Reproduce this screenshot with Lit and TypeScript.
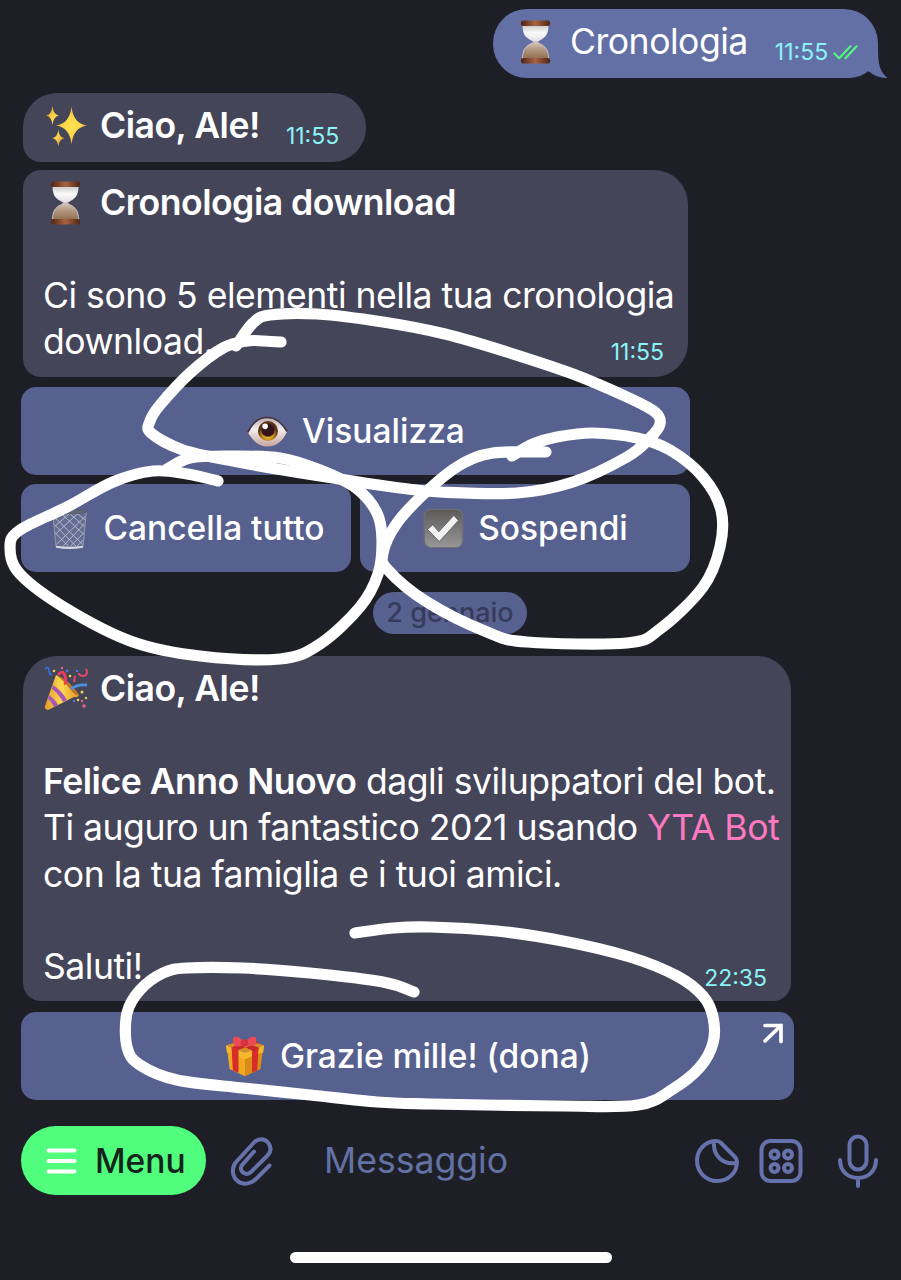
import { LitElement, html, css, svg, nothing } from "lit";
import { customElement, property } from "lit/decorators.js";

type Point = [number, number];

/* Smooth curve through hand-placed points (Catmull-Rom to Bezier). */
function smooth(points: Point[]): string {
  const out = [`M${points[0][0]} ${points[0][1]}`];
  for (let i = 0; i < points.length - 1; i++) {
    const a = points[Math.max(i - 1, 0)];
    const b = points[i];
    const c = points[i + 1];
    const d = points[Math.min(i + 2, points.length - 1)];
    const x1 = b[0] + (c[0] - a[0]) / 6;
    const y1 = b[1] + (c[1] - a[1]) / 6;
    const x2 = c[0] - (d[0] - b[0]) / 6;
    const y2 = c[1] - (d[1] - b[1]) / 6;
    out.push(`C${x1.toFixed(1)} ${y1.toFixed(1)} ${x2.toFixed(1)} ${y2.toFixed(1)} ${c[0]} ${c[1]}`);
  }
  return out.join("");
}

const STROKES: Point[][] = [
  [[281, 342], [264, 341], [247, 341], [223, 348], [190, 373], [160, 405], [150, 421], [151, 433], [183, 450], [233, 461], [283, 470], [333, 478], [400, 488], [440, 492], [517, 493], [573, 482], [627, 457], [650, 438], [660, 424], [655, 412], [627, 397], [573, 374], [507, 352], [445, 334], [383, 322], [317, 314], [270, 315], [253, 323], [236, 346]],
  [[218, 481], [187, 474], [153, 471], [113, 482], [67, 507], [20, 530], [10, 547], [20, 574], [67, 609], [133, 642], [200, 656], [280, 659], [320, 644], [360, 607], [378, 574], [382, 540], [377, 513], [356, 488], [320, 470], [280, 458], [230, 456], [190, 458], [167, 469]],
  [[546, 452], [493, 453], [460, 465], [427, 491], [397, 523], [383, 553], [388, 570], [427, 602], [487, 632], [527, 642], [627, 643], [660, 629], [703, 587], [720, 547], [721, 510], [703, 477], [670, 450], [637, 438], [593, 433], [557, 437], [533, 444], [512, 456]],
  [[355, 933], [393, 928], [430, 927], [497, 931], [563, 941], [630, 957], [677, 976], [703, 996], [713, 1017], [713, 1043], [700, 1067], [673, 1089], [638, 1105], [563, 1106], [430, 1104], [377, 1102], [310, 1095], [243, 1088], [177, 1080], [140, 1065], [127, 1047], [127, 1013], [140, 990], [163, 973], [187, 968], [243, 968], [310, 973], [383, 982], [414, 992]],
];

const GLYPHS = {
  hourglass: svg`
    <defs>
      <linearGradient id="cap"><stop offset="0" stop-color="#4e2417"/><stop offset=".5" stop-color="#a9633f"/><stop offset="1" stop-color="#4e2417"/></linearGradient>
      <linearGradient id="top" x2="0" y2="1"><stop offset="0" stop-color="#c9c6c8"/><stop offset=".45" stop-color="#fbfbfb"/><stop offset="1" stop-color="#dedbe0"/></linearGradient>
      <linearGradient id="sand" x2="0" y2="1"><stop offset="0" stop-color="#d9cbc2"/><stop offset=".45" stop-color="#b39880"/><stop offset="1" stop-color="#8f6d50"/></linearGradient>
    </defs>
    <path d="M9.500 6h26c0 9-3 12.500-8 15-2.500 1.200-3.500 2.500-5 2.500s-2.500-1.300-5-2.500c-5-2.500-8-6-8-15z" fill="url(#top)"/>
    <path d="M22.500 22.500c1.500 0 2.500 1.300 5 2.500 5 2.500 8 6 8 15h-26c0-9 3-12.500 8-15 2.500-1.200 3.500-2.500 5-2.500z" fill="url(#sand)" stroke="#c8c2c6" stroke-width="1"/>
    <rect x="8" y="1.500" width="29" height="5.500" rx="1.800" fill="url(#cap)"/>
    <rect x="8" y="39" width="29" height="5.500" rx="1.800" fill="url(#cap)"/>`,
  sparkles: svg`
    <defs><radialGradient id="gold"><stop offset="0" stop-color="#ffe453"/><stop offset=".6" stop-color="#fbd448"/><stop offset="1" stop-color="#e6a73a"/></radialGradient></defs>
    <path fill="url(#gold)" d="M28.500 3.500q1.700 17 15.500 19-13.800 2-15.500 19-1.700-17-15.500-19 13.800-2 15.500-19z"/>
    <path fill="url(#gold)" d="M9.500 3q.9 8.500 6.300 9.500-5.400 1-6.300 9.500-.9-8.500-6.300-9.500 5.400-1 6.300-9.500zM15.300 27q.8 7.300 6 8.200-5.200 1-6 8.200-.8-7.300-6-8.200 5.200-1 6-8.200z"/>`,
  eye: svg`
    <defs>
      <linearGradient id="white" x2="0" y2="1"><stop offset="0" stop-color="#b7a8b0"/><stop offset=".4" stop-color="#f3eeee"/><stop offset="1" stop-color="#c7a6a0"/></linearGradient>
      <radialGradient id="iris" cy=".75"><stop offset="0" stop-color="#f2c838"/><stop offset=".6" stop-color="#b77f1a"/><stop offset="1" stop-color="#5d3417"/></radialGradient>
    </defs>
    <path d="M2 24C8 12 14 8 23 8s15 5 21 15c-5 11-12 16-21 16S8 34 2 24z" fill="url(#white)"/>
    <path d="M2 24C8 12 14 8 23 8s15 5 21 15" fill="none" stroke="#47343b" stroke-width="1.800"/>
    <circle cx="23.500" cy="22.500" r="10.700" fill="url(#iris)"/>
    <circle cx="23.500" cy="21.500" r="7" fill="#32141a"/>
    <circle cx="20.500" cy="17.500" r="3" fill="#fff"/>`,
  basket: svg`
    <path d="M5 5h36l-3.500 37q-14 3-29 0z" fill="#767f9b" opacity=".45"/>
    <path d="M6 10l31 30M13 6l25 23M22 6l17 15M30 6l10 8M6 18l24 24M7 27l15 15M40 10L9 40M33 6L8 29M24 6L7 21M16 6L6 14M39 18L16 42M39 27L24 42M38 35l-7 7" stroke="#b9bdc8" stroke-width="1" fill="none"/>
    <path d="M5 5l3.500 37M41 5l-3.500 37" stroke="#8f94a3" stroke-width="1.200"/>
    <ellipse cx="23" cy="5" rx="18.500" ry="2" fill="#62687b" stroke="#5c5f6a" stroke-width="1.200"/>
    <path d="M8.500 42.500q14.500 2.500 29 0" stroke="#d5d8df" stroke-width="2.200" fill="none"/>`,
  check: svg`
    <defs><linearGradient id="box" x2="0" y2="1"><stop offset="0" stop-color="#5b5a59"/><stop offset="1" stop-color="#999898"/></linearGradient></defs>
    <rect x="2.500" y="2.500" width="41" height="41" rx="7" fill="url(#box)" stroke="#6d6e78" stroke-width="1.500"/>
    <path d="M6 24l5.500-5 6.500 7.500L34 9l5 5.500L18.500 37z" fill="#f1f1f1" stroke="#505050" stroke-width=".8"/>`,
  party: svg`
    <defs><linearGradient id="cone"><stop offset="0" stop-color="#e39a2d"/><stop offset=".5" stop-color="#ffd94f"/><stop offset="1" stop-color="#dd9427"/></linearGradient></defs>
    <path d="M13 9Q26 14 36 29q-1 3-5 2L5 44q-4-1-3-4z" fill="url(#cone)"/>
    <path d="M10 19q9 6 14 15l-4 2Q15 27 9 23zM6 29q6 4 9 10l-4 2q-3-6-6-8z" fill="#a457b8"/>
    <path d="M13 9Q26 14 36 29q-4 1-9-6T13 9z" fill="#bd7526"/>
    <path d="M15 9q5-6 7 1t-1 8" fill="none" stroke="#ea3c5c" stroke-width="3"/>
    <path d="M28 23q6-5 16-4" fill="none" stroke="#4a8fe0" stroke-width="2.800"/>
    <path d="M2 3q4-3 4 1t3 5l-3-1" fill="none" stroke="#366edb" stroke-width="1.800"/>
    <path d="M43 3q3 5-2 7-5 0-5-3M32 10l-1 6" fill="none" stroke="#e4466d" stroke-width="2"/>
    <g fill="#f6cf48"><circle cx="11" cy="5" r="1.300"/><circle cx="27" cy="10" r="1.300"/><circle cx="39" cy="26" r="1.500"/><circle cx="43" cy="32" r="1.200"/><circle cx="35" cy="34" r="1.300"/></g>
    <g fill="#4c7be0"><circle cx="24" cy="5" r="1.400"/><circle cx="34" cy="5" r="1.300"/><circle cx="31" cy="35" r="1.200"/></g>
    <g fill="#e9638b"><circle cx="41" cy="40" r="1.700"/><circle cx="39" cy="35" r="1.200"/><circle cx="19" cy="2" r="1.200"/></g>`,
  gift: svg`
    <path d="M3.500 17l19 7v20L6 36.500z" fill="#f0a91f"/>
    <path d="M22.500 24l19-7L39 36.500 22.500 44z" fill="#d98c18"/>
    <path d="M2 11L22 5l21 6-20.500 8z" fill="#d78d25"/>
    <path d="M2 11l20.500 8v7L3 18.500zM43 11l-20.500 8v7L42 18.500z" fill="#f5b72e"/>
    <path d="M8 13l7.500 3v24.500L9.500 38zM30 16l7-2.700L35.500 38 30 40.500z" fill="#d92c2c"/>
    <path d="M8 13l24-7 6 2-23 8zM10 8l22 9 6-3-22-9z" fill="#c8262c"/>
    <path d="M22 9C17 1 11 1 10 3s0 8 2 9 8 0 10-3zM22 9c5-8 11-8 12-6s1 7-1 8-9 1-11-2z" fill="#ec4a55"/>
    <circle cx="22" cy="8.500" r="4" fill="#d7323f"/>`,
};

type GlyphName = keyof typeof GLYPHS;

@customElement("chat-emoji")
class ChatEmoji extends LitElement {
  @property() name: GlyphName = "hourglass";
  static styles = css`
    :host { display: block; flex: none; width: 46px; height: 46px; }
    svg { display: block; width: 100%; height: 100%; overflow: visible; }
  `;
  render() {
    return html`<svg viewBox="0 0 46 46">${GLYPHS[this.name]}</svg>`;
  }
}

@customElement("chat-button")
class ChatButton extends LitElement {
  @property() label = "";
  @property() emoji: GlyphName = "eye";
  @property({ type: Boolean }) link = false;
  static styles = css`
    :host {
      position: relative; display: flex; flex: 1; align-items: center; justify-content: center;
      height: 88px; border-radius: 15px; background: #57618f; color: #fff;
      font-size: 33.5px; font-weight: 500; white-space: nowrap;
    }
    .content { display: flex; align-items: center; gap: 13px; height: 46px; }
    .emoji { width: 43px; height: 43px; }
    .arrow { position: absolute; top: 10px; right: 10px; width: 22px; height: 22px; }
  `;
  render() {
    return html`
      <div class="content"><chat-emoji class="emoji" name=${this.emoji}></chat-emoji><span>${this.label}</span></div>
      ${this.link
        ? html`<svg class="arrow" viewBox="0 0 22 22"><path d="M3 3.500h16v16M19 3.500L3 19" fill="none" stroke="#fff" stroke-width="3.700" stroke-linecap="round"/></svg>`
        : nothing}
    `;
  }
}

@customElement("app-root")
class AppRoot extends LitElement {
  static styles = css`
    :host {
      position: relative; display: flex; flex-direction: column; box-sizing: border-box;
      width: 901px; height: 1280px; padding-top: 9px; overflow: hidden;
      background: #1e1f26; color: #fff; font-family: Inter, "Noto Sans", sans-serif;
    }
    svg { display: block; }
    .bubble {
      box-sizing: border-box; margin-left: 23px; padding: 10px 20px 0; background: #454559;
      font-size: 35.6px; line-height: 46.4px; letter-spacing: -0.5px; white-space: nowrap;
    }
    .line { display: flex; align-items: center; height: 46.4px; }
    .title { gap: 11px; font-weight: 600; }
    .single { display: flex; height: 69px; padding-top: 10px; }
    .hello { width: 343px; margin-top: 15px; border-radius: 34px 34px 34px 18px; }
    .history { width: 665px; height: 207px; margin-top: 8px; border-radius: 18px 34px 34px 18px; }
    .wishes { width: 768px; height: 345px; margin-top: 22px; border-radius: 34px 34px 18px 18px; }
    .out {
      position: relative; width: 385px; margin-left: 493px; background: #6370a6;
      border-radius: 34px 34px 28px 34px;
    }
    .tail { position: absolute; left: 355px; top: 38px; width: 40px; height: 31px; }
    .time { color: #8bf3f5; font-size: 23px; font-weight: 400; letter-spacing: 0; line-height: 28px; }
    .single .time { margin-top: 19px; }
    .hello .time { margin-left: 26px; }
    .out .time { margin-left: 27px; }
    .ticks { width: 30px; height: 18px; margin: 24px 0 0 5px; }
    .last { justify-content: space-between; }
    .last .time { padding-top: 20px; margin-right: 4px; }
    b { font-weight: 600; }
    .pink { color: #ff79c0; }
    .keyboard { display: flex; flex-direction: column; gap: 9px; width: 669px; margin: 10px 0 0 21px; }
    .row { display: flex; gap: 9px; }
    .donate { width: 773px; margin-top: 11px; }
    .date {
      width: 154px; height: 42px; margin: 20px 0 0 373px; border-radius: 21px; background: #57618f;
      color: #363b5c; font-size: 27px; font-weight: 500; line-height: 42px; text-align: center;
    }
    .composer { display: flex; align-items: center; height: 69px; margin: 26px 0 0 21px; }
    .menu {
      display: flex; align-items: center; gap: 18px; box-sizing: border-box; width: 185px; height: 69px;
      padding-left: 25px; border-radius: 35px; background: #50fd7d; color: #14231b;
      font-size: 33.5px; font-weight: 500;
    }
    .clip { margin-left: 22px; }
    .field { width: 371px; margin-left: 50px; color: #6272a4; font-size: 35.6px; }
    .keys { margin-left: 20px; }
    .mic { margin-left: 34px; }
    .icon { flex: none; fill: none; stroke: #6672ab; stroke-width: 4; stroke-linecap: round; stroke-linejoin: round; }
    .home { width: 322px; height: 11px; margin: 57px 0 0 290px; border-radius: 6px; background: #fff; }
    .ink {
      position: absolute; left: 0; top: 0; width: 901px; height: 1280px; fill: none; stroke: #fff;
      stroke-width: 11.2; stroke-linecap: round; stroke-linejoin: round; pointer-events: none;
    }
  `;

  render() {
    return html`
      <div class="bubble single out">
        <svg class="tail" viewBox="0 0 40 31"><path d="M30 0C30 16 31 24 39.500 31 33 31 26 29 22.500 25.500L12 20V0z" fill="#6370a6"/></svg>
        <div class="line title"><chat-emoji name="hourglass"></chat-emoji><span style="font-weight:400">Cronologia</span></div>
        <span class="time">11:55</span>
        <svg class="ticks" viewBox="0 0 30 18" fill="none" stroke="#50fa7b" stroke-width="2.400" stroke-linecap="round" stroke-linejoin="round">
          <path d="M1.500 10.500l6 6L21 2M15 16.500L28.500 2"/>
        </svg>
      </div>

      <div class="bubble single hello">
        <div class="line title"><chat-emoji name="sparkles"></chat-emoji><span>Ciao, Ale!</span></div>
        <span class="time">11:55</span>
      </div>

      <div class="bubble history">
        <div class="line title"><chat-emoji name="hourglass"></chat-emoji><span>Cronologia download</span></div>
        <div class="line"></div>
        <div class="line"><span>Ci sono 5 elementi nella tua cronologia</span></div>
        <div class="line last"><span>download.</span><span class="time">11:55</span></div>
      </div>
      <div class="keyboard">
        <div class="row"><chat-button emoji="eye" label="Visualizza"></chat-button></div>
        <div class="row">
          <chat-button emoji="basket" label="Cancella tutto"></chat-button>
          <chat-button emoji="check" label="Sospendi"></chat-button>
        </div>
      </div>

      <div class="date">2 gennaio</div>

      <div class="bubble wishes">
        <div class="line title"><chat-emoji name="party"></chat-emoji><span>Ciao, Ale!</span></div>
        <div class="line"></div>
        <div class="line"><span><b>Felice Anno Nuovo</b> dagli sviluppatori del bot.</span></div>
        <div class="line"><span>Ti auguro un fantastico 2021 usando <span class="pink">YTA Bot</span></span></div>
        <div class="line"><span>con la tua famiglia e i tuoi amici.</span></div>
        <div class="line"></div>
        <div class="line last"><span>Saluti!</span><span class="time">22:35</span></div>
      </div>
      <div class="keyboard donate">
        <div class="row"><chat-button link emoji="gift" label="Grazie mille! (dona)"></chat-button></div>
      </div>

      <div class="composer">
        <div class="menu">
          <svg width="31" height="26" viewBox="0 0 31 26" stroke="#fff" stroke-width="4" stroke-linecap="round"><path d="M2.500 2.500h26M2.500 13h26M2.500 23.500h26"/></svg>
          <span>Menu</span>
        </div>
        <svg class="icon clip" width="46" height="52" viewBox="0 0 46 52">
          <path d="M41.500 30.500L28.500 43.500c-6 6-14 7-19.500 2s-5.500-14 0-19.500L26 7.500c4-4.500 10.500-4.500 14 0s3 9 0 12.500L23 37c-2.500 2.500-6 2.500-8.500 0s-2-5.500.5-8L26 16.500"/>
        </svg>
        <div class="field">Messaggio</div>
        <svg class="icon" width="44" height="44" viewBox="0 0 44 44"><path d="M22 2C10.500 1.500 2 11 2 21.500 2 33 11 42 22 42c11 0 20-8 20-19 0-2-.5-3.500-2-5L26 4c-1.200-1.200-2.500-2-4-2zM19 3c-1 13 8 23 22 21"/></svg>
        <svg class="icon keys" width="44" height="44" viewBox="0 0 44 44">
          <rect x="2.500" y="2" width="39" height="40" rx="9"/>
          <circle cx="15.500" cy="15.500" r="4"/><circle cx="29" cy="15.500" r="4"/><circle cx="15.500" cy="29" r="4"/><circle cx="29" cy="29" r="4"/>
        </svg>
        <svg class="icon mic" width="42" height="54" viewBox="0 0 42 54"><rect x="12.500" y="2.500" width="17" height="33" rx="8.500"/><path d="M3 26c0 11 8 18 18 18s18-7 18-18M21 44v8"/></svg>
      </div>
      <div class="home"></div>

      <svg class="ink" viewBox="0 0 901 1280">${STROKES.map((s) => svg`<path d=${smooth(s)}/>`)}</svg>
    `;
  }
}
